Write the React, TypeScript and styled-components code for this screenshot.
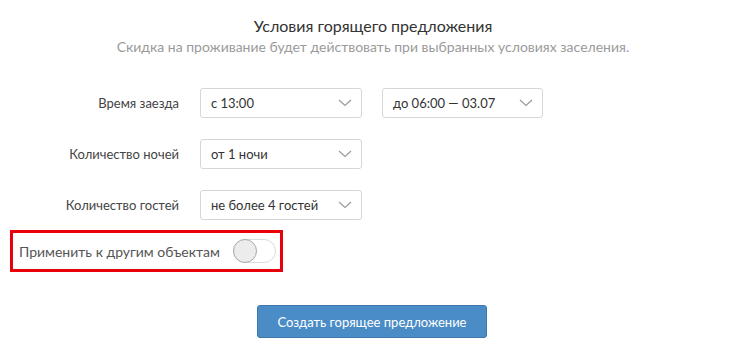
import React from "react";
import styled, { createGlobalStyle } from "styled-components";

const Global = createGlobalStyle`
  html, body { margin: 0; padding: 0; background: #fff; }
  body { font-family: Lato, "Noto Sans", sans-serif; color: #333; }
`;

const Page = styled.div`
  width: 746px;
  height: 354px;
  box-sizing: border-box;
  padding-top: 15px;
  display: flex;
  flex-direction: column;
  white-space: nowrap;
`;

const Header = styled.div`
  display: flex;
  flex-direction: column;
  align-items: center;
  text-align: center;
`;

const Title = styled.div`
  font-size: 16px;
  line-height: 22px;
  color: #333;
`;

const Subtitle = styled.div`
  font-size: 14px;
  line-height: 20px;
  color: #9a9a9a;
`;

const Form = styled.div`
  display: flex;
  flex-direction: column;
  gap: 21px;
  margin-top: 31px;
`;

const Row = styled.div`
  display: flex;
  align-items: center;
  gap: 21px;
`;

const Label = styled.div`
  width: 179px;
  text-align: right;
  font-size: 13px;
  color: #444;
`;

const SelectBox = styled.div<{ $w: number }>`
  box-sizing: border-box;
  width: ${(p) => p.$w}px;
  height: 30px;
  border: 1px solid #d6d6d6;
  border-radius: 3px;
  display: flex;
  align-items: center;
  justify-content: space-between;
  padding: 0 9px 0 10px;
  font-size: 13px;
  color: #333;
  background: #fff;
`;

const Selects = styled.div`
  display: flex;
  gap: 20px;
`;

const Chevron = () => (
  <svg width="14" height="8" viewBox="0 0 14 8" fill="none">
    <path d="M1 1l6 5.5L13 1" stroke="#9a9a9a" strokeWidth="1.2" />
  </svg>
);

const Select = ({ value, w }: { value: string; w: number }) => (
  <SelectBox $w={w}>
    <span>{value}</span>
    <Chevron />
  </SelectBox>
);

const Highlight = styled.div`
  margin-top: 10px;
  margin-left: 10px;
  width: 273px;
  height: 42px;
  box-sizing: border-box;
  border: 3px solid #e8000b;
  display: flex;
  align-items: center;
  justify-content: space-between;
  padding: 0 4px 0 6px;
`;

const ToggleText = styled.span`
  font-size: 14px;
  color: #555;
`;

const Toggle = styled.div`
  position: relative;
  width: 43px;
  height: 24px;
  box-sizing: border-box;
  border: 1px solid #dcdcdc;
  border-radius: 12px;
  background: #fff;
`;

const Knob = styled.div`
  position: absolute;
  left: -1px;
  top: -1px;
  width: 24px;
  height: 24px;
  box-sizing: border-box;
  border-radius: 50%;
  border: 1px solid #a9a9a9;
  background: #ececec;
`;

const Footer = styled.div`
  display: flex;
  padding-left: 257px;
  margin-top: 33px;
`;

const Button = styled.button`
  width: 230px;
  height: 33px;
  box-sizing: border-box;
  background: #4a8cc5;
  border: 1px solid #3d77ac;
  border-radius: 3px;
  color: #fff;
  font-family: inherit;
  font-size: 13px;
  padding: 0;
`;

export default function App() {
  return (
    <>
      <Global />
      <Page>
        <Header>
          <Title>Условия горящего предложения</Title>
          <Subtitle>Скидка на проживание будет действовать при выбранных условиях заселения.</Subtitle>
        </Header>
        <Form>
          <Row>
            <Label>Время заезда</Label>
            <Selects>
              <Select value="с 13:00" w={162} />
              <Select value="до 06:00 — 03.07" w={161} />
            </Selects>
          </Row>
          <Row>
            <Label>Количество ночей</Label>
            <Select value="от 1 ночи" w={162} />
          </Row>
          <Row>
            <Label>Количество гостей</Label>
            <Select value="не более 4 гостей" w={162} />
          </Row>
        </Form>
        <Highlight>
          <ToggleText>Применить к другим объектам</ToggleText>
          <Toggle>
            <Knob />
          </Toggle>
        </Highlight>
        <Footer>
          <Button>Создать горящее предложение</Button>
        </Footer>
      </Page>
    </>
  );
}
